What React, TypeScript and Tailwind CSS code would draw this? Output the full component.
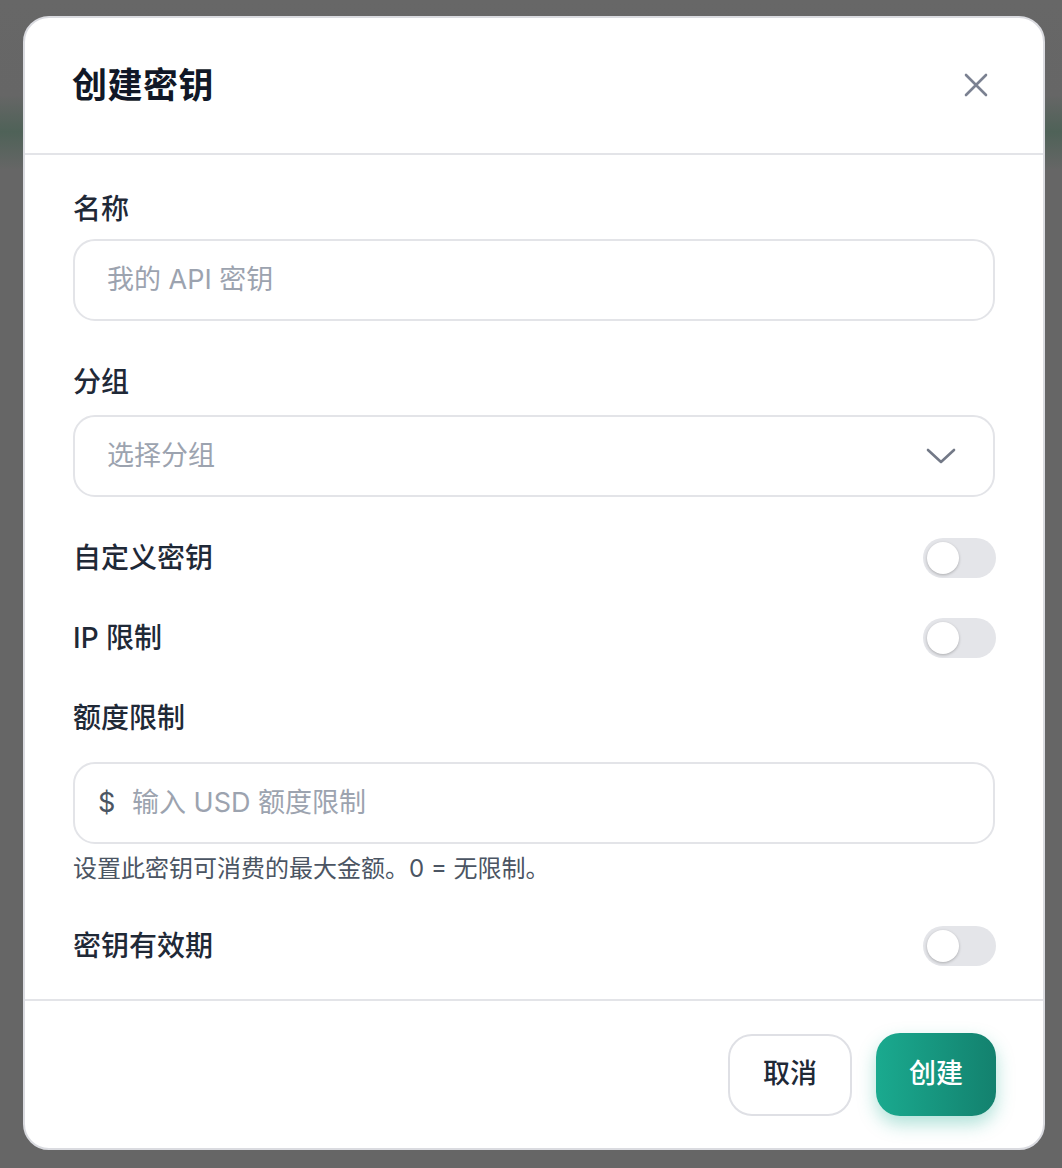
import React from "react";

const font = { fontFamily: 'Inter, "Noto Sans CJK SC", sans-serif' };

function Toggle() {
  return (
    <div className="w-[73px] h-[40px] mr-[-1px] rounded-full bg-[#e4e5e9] p-[4px] flex items-center">
      <div className="w-[32px] h-[32px] rounded-full bg-white shadow-[0_1px_3px_rgba(0,0,0,0.25)]" />
    </div>
  );
}

function Label({ children }: { children: React.ReactNode }) {
  return <div className="text-[28px] leading-[40px] font-medium text-[#1f2937]">{children}</div>;
}

export default function App() {
  return (
    <div
      style={font}
      className="w-[1062px] h-[1168px] pt-[16px] pl-[23px] bg-[linear-gradient(to_bottom,#676767_0px,#666_95px,#4f6258_132px,#666_170px,#666_100%)]"
    >
      <div className="w-[1022px] h-[1134px] bg-white rounded-[26px] border-2 border-[#dadbe0] flex flex-col overflow-hidden">
        {/* header */}
        <div className="h-[137px] shrink-0 px-[48px] flex items-center justify-between border-b-2 border-[#e3e4e8]">
          <h1 className="text-[35px] font-bold text-[#111827] tracking-[0.5px] ml-[-1px]">创建密钥</h1>
          <svg width="24" height="24" viewBox="0 0 24 24" className="mr-[7px] mt-[-2px]">
            <path d="M2 2 L22 22 M22 2 L2 22" stroke="#7b8191" strokeWidth="2.6" strokeLinecap="round" />
          </svg>
        </div>

        {/* body */}
        <div className="flex-1 px-[48px] pt-[34px] pb-[32px] flex flex-col">
          <Label>名称</Label>
          <div className="mt-[10px] h-[82px] rounded-[22px] border-2 border-[#e3e4e8] flex items-center pl-[32px] text-[27px] text-[#9ca3af]">
            我的 API 密钥
          </div>

          <div className="mt-[41px]">
            <Label>分组</Label>
          </div>
          <div className="mt-[13px] h-[82px] rounded-[22px] border-2 border-[#e3e4e8] flex items-center justify-between pl-[32px] pr-[37px] text-[27px] text-[#9ca3af]">
            <span>选择分组</span>
            <svg width="30" height="16" viewBox="0 0 30 16">
              <path d="M2 2 L15 14 L28 2" fill="none" stroke="#737987" strokeWidth="2.6" strokeLinecap="round" strokeLinejoin="round" />
            </svg>
          </div>

          <div className="mt-[41px] flex items-center justify-between">
            <Label>自定义密钥</Label>
            <Toggle />
          </div>
          <div className="mt-[40px] flex items-center justify-between">
            <Label>IP 限制</Label>
            <Toggle />
          </div>

          <div className="mt-[40px]">
            <Label>额度限制</Label>
          </div>
          <div className="mt-[24px] h-[82px] rounded-[22px] border-2 border-[#e3e4e8] flex items-center pl-[23px] text-[27px]">
            <span className="text-[#4b5563] w-[34px]">$</span>
            <span className="text-[#9ca3af]">输入 USD 额度限制</span>
          </div>
          <div className="mt-[10px] text-[24px] leading-[30px] text-[#4b5563]">
            设置此密钥可消费的最大金额。0 = 无限制。
          </div>

          <div className="mt-[42px] flex items-center justify-between">
            <Label>密钥有效期</Label>
            <Toggle />
          </div>
        </div>

        {/* footer */}
        <div className="h-[149px] shrink-0 border-t-2 border-[#e3e4e8] px-[47px] flex items-center justify-end gap-[24px]">
          <button className="w-[124px] h-[82px] rounded-[24px] border-2 border-[#dfe0e5] bg-white text-[27px] font-medium text-[#1f2937]">
            取消
          </button>
          <button className="w-[120px] h-[83px] rounded-[24px] bg-[linear-gradient(to_right,#1aaa8f,#13816e)] text-[27px] font-medium text-white shadow-[0_8px_18px_rgba(26,170,143,0.35)]">
            创建
          </button>
        </div>
      </div>
    </div>
  );
}
